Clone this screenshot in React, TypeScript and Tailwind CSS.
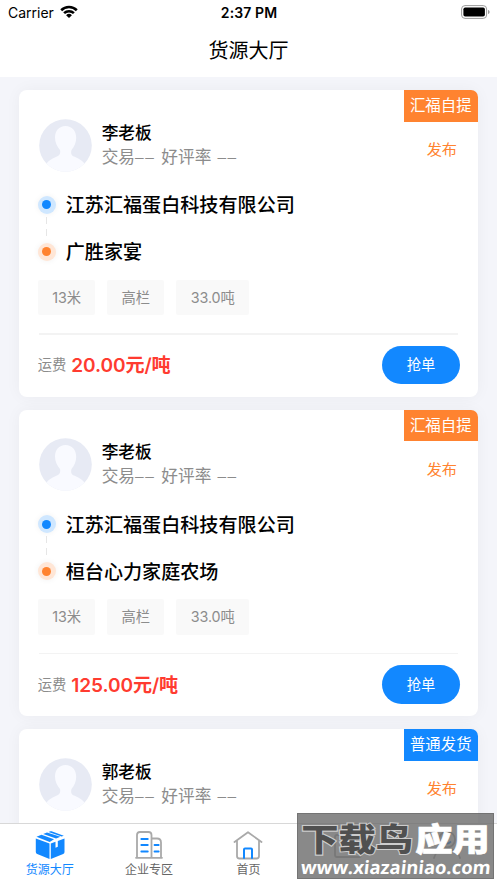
import clsx from 'clsx'

type Order = {
  id: number
  type: string
  owner: string
  self?: boolean
  detail?: { from: string; to: string; tags: string[]; price: string }
}

const orders: Order[] = [
  {
    id: 1,
    type: '汇福自提',
    owner: '李老板',
    self: true,
    detail: { from: '江苏汇福蛋白科技有限公司', to: '广胜家宴', tags: ['13米', '高栏', '33.0吨'], price: '20.00元/吨' },
  },
  {
    id: 2,
    type: '汇福自提',
    owner: '李老板',
    self: true,
    detail: { from: '江苏汇福蛋白科技有限公司', to: '桓台心力家庭农场', tags: ['13米', '高栏', '33.0吨'], price: '125.00元/吨' },
  },
  { id: 3, type: '普通发货', owner: '郭老板' },
]

function StatusBar() {
  return (
    <div className="grid h-[26px] grid-cols-3 items-center pl-[8px] pr-[7px] font-['Inter'] text-[14px] leading-[26px]">
      <div className="flex items-center gap-[6px]">
        <span>Carrier</span>
        <svg width="18" height="13" viewBox="0 0 18 13" className="-mt-[3px]">
          <path d="M0.3 4.3a12.4 12.4 0 0 1 17.4 0l-1.8 1.9a9.8 9.8 0 0 0-13.800 0z" />
          <path d="M3.2 7.3a8.2 8.2 0 0 1 11.6 0L13 9.1a5.6 5.6 0 0 0-8 0z" />
          <path d="M6.1 10.2a4.1 4.1 0 0 1 5.800 0L9 13z" />
        </svg>
      </div>
      <span className="text-center font-semibold tracking-[0.1px]">2:37 PM</span>
      <svg width="29" height="14" viewBox="0 0 29 14" className="-mt-[2px] justify-self-end">
        <rect x="0.6" y="0.6" width="25" height="12.8" rx="3.4" fill="none" stroke="#9b9b9b" />
        <rect x="2.4" y="2.4" width="21.5" height="9.2" rx="1.8" />
        <path d="M27 5v4c2.200-.8 2.200-3.200 0-4z" fill="#9b9b9b" />
      </svg>
    </div>
  )
}

function Avatar() {
  return (
    <svg width="53" height="53" viewBox="0 0 53 53">
      <defs>
        <clipPath id="avatar">
          <circle cx="26.500" cy="26.500" r="26.300" />
        </clipPath>
      </defs>
      <g clipPath="url(#avatar)">
        <rect width="53" height="53" fill="#e7eaf4" />
        <path
          d="M26.500 7C20 7 16 12 16 18.500c0 5 2 9 5 12.500.8 3.500-.5 5.500-3 6.500C12 40 7 43 4 50v5h45v-5c-3-7-8-10-14-12.500-2.500-1-3.500-3-2.500-6.500 3-3.500 4.700-7.500 4.700-12.500C37.200 12 33 7 26.500 7z"
          fill="#f9faff"
        />
      </g>
    </svg>
  )
}

function RouteDot({ color }: { color: 'blue' | 'orange' }) {
  return (
    <span
      className={clsx(
        'flex size-[18px] shrink-0 items-center justify-center rounded-full shadow-[0_0_6px_rgba(0,0,0,0.06)]',
        color === 'blue' ? 'bg-[#cfe7ff]' : 'bg-[#ffe6d6]',
      )}
    >
      <span className={clsx('size-[9px] rounded-full', color === 'blue' ? 'bg-[#1288ff]' : 'bg-[#ff8330]')} />
    </span>
  )
}

function Dashes({ className }: { className?: string }) {
  return <span className={clsx("-mt-px font-['Liberation_Sans'] text-[15.500px] tracking-[1.500px]", className)}>––</span>
}

function OrderDetail({ detail }: { detail: NonNullable<Order['detail']> }) {
  return (
    <>
      {/* Route */}
      <div className="mt-[21px] text-[19.100px] font-medium leading-[24px] text-black">
        <div className="-ml-px flex h-6 items-center gap-[10px]">
          <RouteDot color="blue" />
          <span className="pt-px">{detail.from}</span>
        </div>
        <div className="ml-[7px] flex h-[23px] flex-col items-start gap-[5px]">
          <span className="h-[7px] w-px bg-[#e6e6e6]" />
          <span className="h-[7px] w-px bg-[#e6e6e6]" />
        </div>
        <div className="-ml-px flex h-6 items-center gap-[10px]">
          <RouteDot color="orange" />
          <span className="pt-px">{detail.to}</span>
        </div>
      </div>

      <div className="-ml-[0.800px] mt-[16px] flex gap-[12px] text-[14.300px] leading-[35.500px] text-[#8c8c8c]">
        {detail.tags.map((tag) => (
          <span key={tag} className="rounded-[2px] bg-[#f9f9f9] px-[14.300px] tracking-[-0.05px]">
            {tag}
          </span>
        ))}
      </div>

      <div className="mt-[18px] h-[1.500px] bg-[#f3f3f3]" />

      <div className="-ml-px mt-[11px] flex h-[38.500px] items-center">
        <span className="text-[14.300px] text-[#8c8c8c]">运费</span>
        <span className="ml-[5px] pt-[1.500px] text-[19.100px] font-semibold tracking-[-0.1px] text-[#ff3b30]">{detail.price}</span>
        <button className="-mr-[1.800px] ml-auto h-[38.500px] w-[77.500px] rounded-full bg-[#1288ff] text-[14.300px] text-white">抢单</button>
      </div>
    </>
  )
}

function OrderCard({ order }: { order: Order }) {
  return (
    <div className="relative h-[306.500px] shrink-0 rounded-[8px] bg-white px-[19.500px] pt-[28.500px] shadow-[0_0_16px_rgba(0,0,0,0.045)]">
      <div
        className={clsx(
          'absolute right-0 top-0 h-[31.300px] w-[73.500px] rounded-tr-[7px] text-center text-[15.400px] leading-[31px] text-white',
          order.self ? 'bg-[#ff8330]' : 'bg-[#1288ff]',
        )}
      >
        {order.type}
      </div>

      {/* Owner */}
      <div className="flex h-[53px]">
        <Avatar />
        <div className="ml-[10px] flex-1">
          <div className="mt-[2px] text-[16.700px] font-medium leading-[25px] text-black">{order.owner}</div>
          <div className="flex text-[16.700px] leading-[23.500px] text-[#8c8c8c]">
            交易
            <Dashes />
            <span className="ml-[6px]">好评率</span>
            <Dashes className="ml-[6px]" />
          </div>
        </div>
        <div className="mr-[1px] mt-[20.500px] text-[15.200px] leading-[22px] text-[#ff8330]">发布</div>
      </div>

      {order.detail && <OrderDetail detail={order.detail} />}
    </div>
  )
}

function BoxIcon() {
  return (
    <svg width="30" height="30" viewBox="0 0 30 30" fill="#1288ff">
      <path d="M.8 8.500l13.700 5V29L2.200 24Q.8 23.500.8 22z" />
      <path d="M15.800 13.500L20.500 11.800v6l2.300-1V11l6.700-2.500V22q0 1.500-1.300 2L15.800 29z" />
      <path d="M1.500 6.800L6.500 4.800 19 9.300l-4.300 2.600z" />
      <path d="M8.200 4L12 2.600l13.400 4.200-4.300 1.700z" />
      <path d="M13.500 2.100L15.500 1.300q.5-.2 1 0l12.300 4.500-2.200.8z" />
    </svg>
  )
}

function CompanyIcon() {
  return (
    <svg width="30" height="30" viewBox="0 0 30 30" fill="none" stroke="#a9a9a9" strokeWidth="1.800" strokeLinecap="round">
      <path d="M2 27.800h26M3 27V5q0-3 3-3h8.500q3 0 3 3v22M17.500 8.500h5.500q4 0 4 4V27" />
      <path stroke="#1288ff" d="M7.300 9h6.500M7.300 15h6.500M7.300 21.500h6.500M20.500 15h4.200M20.500 21.500h4.200" />
    </svg>
  )
}

function HomeIcon() {
  return (
    <svg width="30" height="30" viewBox="0 0 30 30" fill="none" stroke="#a9a9a9" strokeWidth="1.800" strokeLinecap="round" strokeLinejoin="round">
      <path d="M1.500 12L15 2.200 28.500 12M4 11v15q0 2.500 2.500 2.500h17q2.500 0 2.500-2.500V11" />
      <path stroke="#1288ff" strokeWidth="2" d="M11 28v-8.500q0-1 1-1h6q1 0 1 1V28" />
    </svg>
  )
}

function MessageIcon() {
  return (
    <svg width="30" height="30" viewBox="0 0 30 30" fill="none" stroke="#a9a9a9" strokeWidth="1.800">
      <path d="M2 7q0-2 2-2h22q2 0 2 2v18q0 2-2 2H4q-2 0-2-2z" />
      <path stroke="#1288ff" strokeWidth="2" d="M9 3h12" />
    </svg>
  )
}

function MineIcon() {
  return (
    <svg width="30" height="30" viewBox="0 0 30 30" fill="none" stroke="#a9a9a9" strokeWidth="1.800" strokeLinecap="round">
      <circle cx="15" cy="9.500" r="8" />
      <path d="M2 28q2-9 13-9t13 9" />
      <path stroke="#1288ff" d="M11.500 12q3.500 3 7 0" />
    </svg>
  )
}

const tabs = [
  { key: 'hall', label: '货源大厅', icon: <BoxIcon />, active: true },
  { key: 'company', label: '企业专区', icon: <CompanyIcon /> },
  { key: 'home', label: '首页', icon: <HomeIcon /> },
  { key: 'message', icon: <MessageIcon /> },
  { key: 'mine', icon: <MineIcon /> },
]

function Watermark() {
  return (
    <div className="absolute bottom-[4px] right-[3px] flex h-[66px] w-[197px] flex-col items-center border border-[#666]/60 bg-[#6c6c6c]/80 text-white">
      <div className="mt-[8px] flex h-[36px] scale-y-[0.84] items-center gap-[2px] text-[37.300px] font-black leading-[36px]">
        <span className="text-[#505050] [-webkit-text-stroke:2.500px_#ccc] [paint-order:stroke_fill]">下载鸟</span>
        <span className="[-webkit-text-stroke:0.800px_#fff]">应用</span>
      </div>
      <div className="-mt-[1px] -skew-x-6 font-['Open_Sans'] text-[18.400px] font-bold leading-[20px]">www.xiazainiao.com</div>
    </div>
  )
}

export default function App() {
  return (
    <div className="relative flex h-[883px] w-[497px] flex-col overflow-hidden bg-[#f4f5fa] font-['Inter','Noto_Sans_CJK_SC',sans-serif] text-black">
      <header className="h-[77px] shrink-0 bg-white">
        <StatusBar />
        <h1 className="pt-px text-center text-[20px] leading-[48px]">货源大厅</h1>
      </header>

      <main className="flex min-h-0 flex-1 flex-col gap-[13px] overflow-hidden pl-[19.200px] pr-[19.500px] pt-[13.300px]">
        {orders.map((order) => (
          <OrderCard key={order.id} order={order} />
        ))}
      </main>

      <nav className="grid h-[60.500px] shrink-0 grid-cols-5 border-t border-[#d8d8d8] bg-white">
        {tabs.map((tab) => (
          <div key={tab.key} className="flex flex-col items-center pt-[6px]">
            {tab.icon}
            {tab.label && (
              <span className={clsx('pt-px text-[12px] leading-[18px]', tab.active ? 'text-[#1288ff]' : 'text-[#666]')}>{tab.label}</span>
            )}
          </div>
        ))}
      </nav>

      <Watermark />
    </div>
  )
}
